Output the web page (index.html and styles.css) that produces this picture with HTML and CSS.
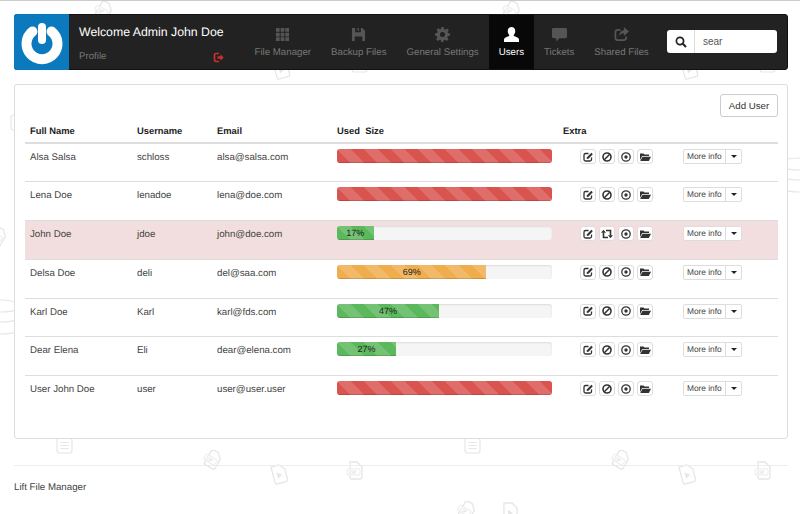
FILE: index.html
```html
<!DOCTYPE html>
<html lang="en">
<head>
    <meta charset="UTF-8">
    <meta name="viewport" content="width=device-width, initial-scale=1.0">
    <title>Lift File Manager</title>
    <link rel="stylesheet" href="styles.css">
</head>
<body>
    <svg class="defs" width="0" height="0">
        <defs>
            <g id="i-edit"><path d="M6.500 2.500H3.500A1.500 1.500 0 0 0 2 4v4.500A1.500 1.500 0 0 0 3.500 10H8a1.500 1.500 0 0 0 1.500-1.500V6.500" fill="none" stroke="currentColor" stroke-width="1.300"/><path d="M5 6.200l4.300-4.500 1.500 1.500L6.500 7.700 4.700 8z" fill="currentColor"/></g>
            <g id="i-ban"><circle cx="6" cy="6" r="4" fill="none" stroke="currentColor" stroke-width="1.600"/><path d="M3.300 8.700l5.400-5.400" stroke="currentColor" stroke-width="1.600"/></g>
            <g id="i-target"><circle cx="6" cy="6" r="4.200" fill="none" stroke="currentColor" stroke-width="1.300"/><circle cx="6" cy="6" r="1.700" fill="currentColor"/></g>
            <g id="i-folder"><path d="M1 2.500h3.500l1 1H10v1.500H3.200L1 9z" fill="currentColor"/><path d="M3.600 5.700H12L9.800 10H1.200z" fill="currentColor"/></g>
            <g id="i-retweet"><path d="M2.500 4.500v5H7M5 2.500h4.500v5" fill="none" stroke="currentColor" stroke-width="1.600"/><path d="M0 4.700L2.500 1.700 5 4.700zM7 7.300h5L9.500 10.300z" fill="currentColor"/></g>
            <g id="bg-note"><rect x="1" y="1" width="15" height="15" rx="2.500" fill="none" stroke="currentColor" stroke-width="1.200"/><path d="M4.500 5.500h8M4.500 8.500h8M4.500 11.500h8" stroke="currentColor" stroke-width="1.200"/></g>
            <g id="bg-zip"><path d="M4 1h7l5 5v10a2 2 0 0 1-2 2H6a2 2 0 0 1-2-2z" fill="#fff" stroke="currentColor" stroke-width="1.300"/><rect x="1" y="8" width="13" height="6" rx="1" fill="#fff" stroke="currentColor" stroke-width=".8"/><text x="2.500" y="13" font-size="5" font-family="Liberation Sans" font-weight="700" fill="currentColor">ZIP</text></g>
            <g id="bg-play"><path d="M3 1h8l5 5v11a2 2 0 0 1-2 2H5a2 2 0 0 1-2-2z" fill="none" stroke="currentColor" stroke-width="1.300"/><path d="M7 8l5 3-5 3z" fill="currentColor"/></g>
            <g id="bg-stack"><path d="M0 2c8 0 14 1 18 3M0 14c8 0 14-1 18-3M0 24c8 0 14-1 18-3M0 36c8 0 14-1 18-3" fill="none" stroke="currentColor" stroke-width="1.200"/></g>
        </defs>
    </svg>

    <div class="wallpaper">
        <svg class="paper-ico" style="left:94px;top:0" width="22" height="22"><use href="#bg-zip" transform="rotate(30 10 10)"/></svg>
        <svg class="paper-ico" style="left:502px;top:0" width="22" height="22"><use href="#bg-zip" transform="rotate(30 10 10)"/></svg>
        <svg class="paper-ico" style="left:272px;top:58px" width="22" height="22"><use href="#bg-play" transform="rotate(-15 10 10)"/></svg>
        <svg class="paper-ico" style="left:351px;top:55px" width="22" height="22"><use href="#bg-note"/></svg>
        <svg class="paper-ico" style="left:680px;top:58px" width="22" height="22"><use href="#bg-play" transform="rotate(-15 10 10)"/></svg>
        <svg class="paper-ico" style="left:759px;top:55px" width="22" height="22"><use href="#bg-note"/></svg>
        <svg class="paper-ico" style="left:10px;top:113px" width="22" height="22"><use href="#bg-note"/></svg>
        <svg class="paper-ico" style="left:-12px;top:226px" width="24" height="24"><use href="#bg-zip" transform="rotate(30 10 10)"/></svg>
        <svg class="paper-ico" style="left:0;top:297px" width="18" height="40"><use href="#bg-stack"/></svg>
        <svg class="paper-ico flip" style="left:782px;top:155px" width="18" height="40"><use href="#bg-stack"/></svg>
        <svg class="paper-ico" style="left:56px;top:436px" width="22" height="22"><use href="#bg-note"/></svg>
        <svg class="paper-ico" style="left:464px;top:436px" width="22" height="22"><use href="#bg-note"/></svg>
        <svg class="paper-ico" style="left:203px;top:449px" width="24" height="24"><use href="#bg-zip" transform="rotate(30 10 10)"/></svg>
        <svg class="paper-ico" style="left:611px;top:449px" width="24" height="24"><use href="#bg-zip" transform="rotate(30 10 10)"/></svg>
        <svg class="paper-ico" style="left:270px;top:463px" width="22" height="22"><use href="#bg-play" transform="rotate(-15 10 10)"/></svg>
        <svg class="paper-ico" style="left:678px;top:463px" width="22" height="22"><use href="#bg-play" transform="rotate(-15 10 10)"/></svg>
        <svg class="paper-ico" style="left:346px;top:460px" width="22" height="22"><use href="#bg-zip"/></svg>
        <svg class="paper-ico" style="left:754px;top:460px" width="22" height="22"><use href="#bg-zip"/></svg>
        <svg class="paper-ico" style="left:457px;top:500px" width="22" height="22"><use href="#bg-zip" transform="rotate(30 10 10)"/></svg>
        <svg class="paper-ico" style="left:501px;top:501px" width="22" height="22"><use href="#bg-play"/></svg>
    </div>

    <div class="page">
        <nav class="topbar">
            <div class="logo">
                <svg width="46" height="46" viewBox="0 0 46 46">
                    <path d="M13.500 12.500A15.500 15.500 0 1 0 32.500 12.500" fill="none" stroke="#fff" stroke-width="10" stroke-linecap="round"/>
                    <path d="M23 8v13" stroke="#fff" stroke-width="8" stroke-linecap="round"/>
                </svg>
            </div>
            <div class="welcome">
                <div class="welcome-name">Welcome Admin John Doe</div>
                <div class="welcome-sub">
                    <span>Profile</span>
                    <svg width="11" height="11" viewBox="0 0 11 11"><path d="M6 1.500H3A1.500 1.500 0 0 0 1.500 3v5A1.500 1.500 0 0 0 3 9.500h3" fill="none" stroke="#c9302c" stroke-width="1.700"/><path d="M4.500 4.300h3V2.300l3.200 3.200-3.200 3.200V6.700h-3z" fill="#c9302c"/></svg>
                </div>
            </div>
            <ul class="menu">
                <li class="menu-item">
                    <svg width="15" height="15" viewBox="0 0 16 16" fill="#555"><path d="M1 1h4v4H1zM6 1h4v4H6zM11 1h4v4h-4zM1 6h4v4H1zM6 6h4v4H6zM11 6h4v4h-4zM1 11h4v4H1zM6 11h4v4H6zM11 11h4v4h-4z"/></svg>
                    File Manager
                </li>
                <li class="menu-item">
                    <svg width="15" height="15" viewBox="0 0 16 16" fill="#555"><path d="M1 1h11l3 3v11H1zM4.500 1v4.500h6V1H8.500v3H7V1zM4 10v5h8v-5z" fill-rule="evenodd"/></svg>
                    Backup Files
                </li>
                <li class="menu-item">
                    <svg width="15" height="15" viewBox="0 0 16 16" fill="#555"><path d="M6.700 0h2.600l.4 2.300 1.300.6 2-1.300 1.800 1.800-1.300 2 .6 1.300L16 6.700v2.600l-2.300.4-.6 1.300 1.300 2-1.800 1.800-2-1.300-1.300.6-.4 2.300H6.700l-.4-2.300-1.300-.6-2 1.300-1.800-1.800 1.300-2-.6-1.300L0 9.300V6.700l2.300-.4.6-1.300-1.300-2 1.800-1.800 2 1.300 1.300-.6zM8 5.300a2.700 2.700 0 1 0 0 5.400 2.700 2.700 0 0 0 0-5.400z" fill-rule="evenodd"/></svg>
                    General Settings
                </li>
                <li class="menu-item active">
                    <svg width="15" height="15" viewBox="0 0 16 16" fill="#fff"><path d="M8 0c2.500 0 4 1.800 4 4.200 0 1.800-.7 3.200-1.600 4.200v1.300c1.900.7 5.100 1.700 5.600 3.300v3H0v-3c.5-1.600 3.700-2.600 5.600-3.300V8.400C4.700 7.400 4 6 4 4.200 4 1.800 5.500 0 8 0z"/></svg>
                    Users
                </li>
                <li class="menu-item">
                    <svg width="15" height="15" viewBox="0 0 16 16" fill="#555"><path d="M1.500 1h13A1.500 1.500 0 0 1 16 2.500v8a1.500 1.500 0 0 1-1.500 1.500H8l-3.500 3.500V12h-3A1.500 1.500 0 0 1 0 10.500v-8A1.500 1.500 0 0 1 1.500 1z"/></svg>
                    Tickets
                </li>
                <li class="menu-item">
                    <svg width="15" height="15" viewBox="0 0 16 16" fill="#555"><path d="M7 3H4a2.500 2.500 0 0 0-2.500 2.500v6A2.500 2.500 0 0 0 4 14h6.500A2.500 2.500 0 0 0 13 11.500V10" fill="none" stroke="#555" stroke-width="1.900"/><path d="M10.500 0L16 4.800l-5.500 4.800V6.700C8 6.700 6.500 7.700 5.500 10c0-4 2-6.300 5-6.600z"/></svg>
                    Shared Files
                </li>
            </ul>
            <form class="search">
                <span class="search-ico">
                    <svg width="12" height="12" viewBox="0 0 12 12"><circle cx="5" cy="5" r="3.600" fill="none" stroke="#222" stroke-width="1.700"/><path d="M7.800 7.800l3.200 3.200" stroke="#222" stroke-width="2"/></svg>
                </span>
                <input class="search-input" type="text" value="sear">
            </form>
        </nav>

        <section class="card">
            <div class="card-top"><button class="btn-add" type="button">Add User</button></div>
            <table class="users">
                <thead>
                    <tr>
                        <th class="col-name">Full Name</th>
                        <th class="col-user">Username</th>
                        <th class="col-mail">Email</th>
                        <th class="col-size">Used&nbsp; Size</th>
                        <th class="col-extra">Extra</th>
                        <th></th>
                    </tr>
                </thead>
                <tbody id="rows"></tbody>
            </table>
        </section>

        <footer class="foot">Lift File Manager</footer>
    </div>

    <script>
        const usuarios = [
            { nome: 'Alsa Salsa', user: 'schloss', mail: 'alsa@salsa.com', uso: 100, cor: 'red', texto: '' },
            { nome: 'Lena Doe', user: 'lenadoe', mail: 'lena@doe.com', uso: 100, cor: 'red', texto: '' },
            { nome: 'John Doe', user: 'jdoe', mail: 'john@doe.com', uso: 17, cor: 'green', texto: '17%', banido: true },
            { nome: 'Delsa Doe', user: 'deli', mail: 'del@saa.com', uso: 69.500, cor: 'orange', texto: '69%' },
            { nome: 'Karl Doe', user: 'Karl', mail: 'karl@fds.com', uso: 47.500, cor: 'green', texto: '47%' },
            { nome: 'Dear Elena', user: 'Eli', mail: 'dear@elena.com', uso: 27.500, cor: 'green', texto: '27%' },
            { nome: 'User John Doe', user: 'user', mail: 'user@user.user', uso: 100, cor: 'red', texto: '' }
        ];

        function icone(nome) {
            return `<button class="btn-ico" type="button"><svg width="12" height="12" viewBox="0 0 12 12"><use href="#i-${nome}"/></svg></button>`;
        }

        const rows = document.getElementById('rows');
        for (const u of usuarios) {
            const tr = document.createElement('tr');
            if (u.banido) tr.className = 'banned';
            tr.innerHTML = `
                <td>${u.nome}</td>
                <td>${u.user}</td>
                <td>${u.mail}</td>
                <td><div class="bar"><div class="bar-fill ${u.cor}" style="width:${u.uso}%">${u.texto}</div></div></td>
                <td><div class="ico-group">${icone('edit')}${icone(u.banido ? 'retweet' : 'ban')}${icone('target')}${icone('folder')}</div></td>
                <td><div class="more"><span class="more-label">More info</span><span class="more-caret"></span></div></td>`;
            rows.appendChild(tr);
        }
    </script>
</body>
</html>
```

FILE: styles.css
```css
* {
    box-sizing: border-box;
}
html, body {
    height: 100%;
}
body {
    margin: 0;
    font-family: "Liberation Sans", Arial, sans-serif;
    font-size: 9.700px;
    text-rendering: geometricPrecision;
    color: #333;
    background: #fff;
    border-top: 1px solid #ccc;
    overflow: hidden;
    position: relative;
}
.defs {
    position: absolute;
}
.wallpaper {
    position: absolute;
    inset: 0;
    color: #e6e6e6;
    overflow: hidden;
}
.paper-ico {
    position: absolute;
}
.flip {
    transform: scaleX(-1);
}
.page {
    position: relative;
    padding: 13px 12px 0 14px;
}
.topbar {
    display: flex;
    align-items: stretch;
    height: 56px;
    background: #222;
    border: 1px solid #111;
    border-radius: 3px;
}
.logo {
    width: 55px;
    margin: -1px 0 -1px -1px;
    background: #0a79bd;
    border-radius: 3px 0 0 3px;
    display: flex;
    align-items: center;
    justify-content: center;
}
.welcome {
    width: 175.500px;
    padding: 9px 0 0 10px;
}
.welcome-name {
    color: #fff;
    font-size: 12.300px;
    line-height: 16px;
}
.welcome-sub {
    display: flex;
    justify-content: space-between;
    align-items: center;
    margin-top: 10px;
    padding-right: 20.500px;
    color: #777;
    line-height: 14px;
}
.menu {
    display: flex;
    list-style: none;
    margin: 0;
    padding: 0;
}
.menu-item {
    display: flex;
    flex-direction: column;
    align-items: center;
    gap: 5px;
    padding: 12px 10px 0;
    color: #777;
    line-height: 12px;
    white-space: nowrap;
}
.menu-item.active {
    color: #fff;
    background: #080808;
}
.search {
    display: flex;
    margin: 15px 10px 0 auto;
    width: 110px;
    height: 23px;
    background: #fff;
    border-radius: 3px;
}
.search-ico {
    width: 28px;
    display: flex;
    align-items: center;
    justify-content: center;
    border-right: 1px solid #ddd;
}
.search-input {
    flex: 1;
    width: 0;
    border: 0;
    padding: 0 0 0 8px;
    background: transparent;
    font: 10px "Liberation Sans", Arial, sans-serif;
    color: #555;
    outline: none;
}
.card {
    height: 355px;
    margin-top: 14px;
    padding: 9px 9px 0 10px;
    background: #fff;
    border: 1px solid #ddd;
    border-radius: 3px;
}
.card-top {
    display: flex;
    justify-content: flex-end;
    height: 29px;
}
.btn-add {
    width: 58px;
    height: 23px;
    padding: 0;
    background: #fff;
    border: 1px solid #ccc;
    border-radius: 3px;
    font: 9.700px "Liberation Sans", Arial, sans-serif;
    color: #333;
}
.users {
    width: 753px;
    border-collapse: collapse;
    table-layout: fixed;
}
.users th {
    height: 20px;
    padding: 1px 5px 0;
    text-align: left;
    font-size: 9.400px;
    color: #222;
    vertical-align: top;
    border-bottom: 2px solid #ddd;
    line-height: 14px;
}
.col-name { width: 107px; }
.col-user { width: 80px; }
.col-mail { width: 120px; }
.col-size { width: 226px; }
.col-extra { width: 120px; }
.users td {
    height: 38.800px;
    padding: 7px 5px 0;
    vertical-align: top;
    border-bottom: 1px solid #ddd;
    line-height: 14px;
    color: #444;
}
.users tr:last-child td {
    border-bottom: 0;
}
.banned td {
    background: #f2dede;
}
.bar {
    height: 14px;
    width: 215px;
    margin-top: -2px;
    background: #f5f5f5;
    border-radius: 3px;
    box-shadow: inset 0 1px 2px rgba(0, 0, 0, .1);
    overflow: hidden;
}
.bar-fill {
    height: 100%;
    text-align: center;
    font-size: 9px;
    line-height: 14px;
    color: #222;
    box-shadow: inset 0 -1px 0 rgba(0, 0, 0, .15);
    background-image: linear-gradient(45deg, rgba(255,255,255,.15) 25%, transparent 25%, transparent 50%, rgba(255,255,255,.15) 50%, rgba(255,255,255,.15) 75%, transparent 75%, transparent);
    background-size: 27px 27px;
}
.red { background-color: #d9534f; }
.green { background-color: #5cb85c; }
.orange { background-color: #f0ad4e; }
.ico-group {
    display: flex;
    gap: 3px;
    margin-left: 13px;
    margin-top: -2px;
    padding-left: 4px;
}
.btn-ico {
    width: 16px;
    height: 15px;
    padding: 0;
    display: flex;
    align-items: center;
    justify-content: center;
    color: #333;
    background: #fff;
    border: 1px solid #ddd;
    border-radius: 3px;
}
.more {
    display: flex;
    width: 59px;
    height: 15px;
    margin-top: -2px;
    background: #fff;
    border: 1px solid #ddd;
    border-radius: 2px;
    font-size: 8.300px;
    line-height: 13px;
    color: #444;
}
.more-label {
    padding-left: 3px;
    width: 42px;
    border-right: 1px solid #ddd;
    white-space: nowrap;
}
.more-caret {
    flex: 1;
    position: relative;
}
.more-caret::after {
    content: "";
    position: absolute;
    left: 5px;
    top: 5px;
    border-top: 3px solid #222;
    border-left: 3px solid transparent;
    border-right: 3px solid transparent;
}
.foot {
    margin-top: 26px;
    padding-top: 15px;
    border-top: 1px solid #eee;
    color: #444;
    line-height: 14px;
}
```
